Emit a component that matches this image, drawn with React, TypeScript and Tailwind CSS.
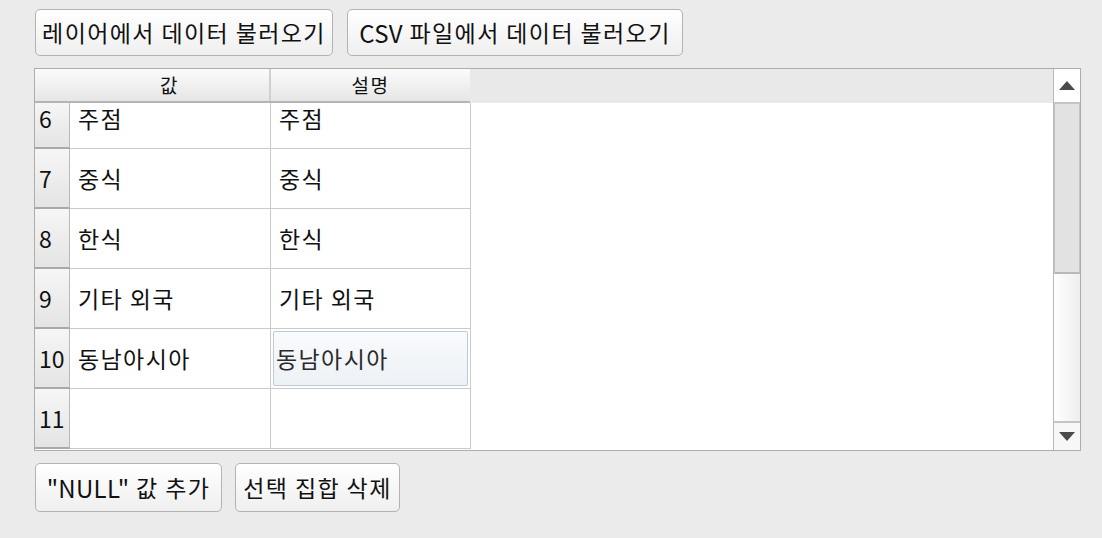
import React from "react";

const FONT = { fontFamily: '"Noto Sans CJK KR", "Noto Sans", sans-serif' };

function Btn({ children, w }: { children: React.ReactNode; w: string }) {
  return (
    <div className={`${w} h-full flex items-center justify-center rounded-[5px] border border-[#b3b3b3] bg-gradient-to-b from-[#ffffff] to-[#efefef] text-[23px] tracking-[1.4px] text-[#111] leading-none whitespace-nowrap`}>
      {children}
    </div>
  );
}

const rows = [
  { n: "6", v: "주점", d: "주점", first: true },
  { n: "7", v: "중식", d: "중식" },
  { n: "8", v: "한식", d: "한식" },
  { n: "9", v: "기타 외국", d: "기타 외국" },
  { n: "10", v: "동남아시아", d: "동남아시아", sel: true },
  { n: "11", v: "", d: "" },
];

export default function App() {
  return (
    <div className="w-[1102px] h-[538px] bg-[#ebebeb] flex flex-col" style={FONT}>
      <div className="flex gap-[14px] h-[47px] mt-[9px] ml-[35px]">
        <Btn w="w-[298px]">레이어에서 데이터 불러오기</Btn>
        <Btn w="w-[336px]">
          <span className="tracking-[0.3px] text-[24px]">CSV</span>&nbsp;파일에서 데이터 불러오기
        </Btn>
      </div>
      <div className="mt-[12px] ml-[34px] w-[1047px] h-[383px] border border-[#adadad] flex bg-white">
        <div className="flex-1 flex flex-col overflow-hidden">
          <div className="h-[34px] flex shrink-0 bg-[#e9e9e9]">
            <div className="flex h-full border-b-2 border-[#b4b4b4] bg-gradient-to-b from-[#fbfbfb] to-[#e6e6e6] text-[19px] tracking-[1.5px] text-[#111]">
              <div className="w-[35px]" />
              <div className="w-[201px] flex items-center justify-center border-r-2 border-[#d0d0d0]">값</div>
              <div className="w-[199px] flex items-center justify-center">설명</div>
            </div>
          </div>
          <div className="flex-1 overflow-hidden">
            <div className="flex flex-col">
              {rows.map((r) => (
                <div
                  key={r.n}
                  className={r.first ? "flex h-[46px] shrink-0 leading-[1.2]" : "flex h-[60px] shrink-0"}
                >
                  <div className={`w-[35px] h-full border-r border-b-2 border-[#a9a9a9] border-r-[#b9b9b9] bg-gradient-to-b from-[#f6f6f6] to-[#e4e4e4] flex items-center pl-[4px] text-[23px] text-[#111] ${r.first ? "pb-[13px]" : ""}`}>
                    {r.n}
                  </div>
                  <div className={`w-[201px] h-full border-r border-b border-[#cacaca] flex items-center pl-[8px] text-[23px] tracking-[1.4px] text-[#111] ${r.first ? "pb-[13px]" : ""}`}>
                    {r.v}
                  </div>
                  <div className={`w-[200px] h-full border-r border-b border-[#cacaca] flex items-center p-[2px] text-[23px] tracking-[1.4px] text-[#111] ${r.first ? "pb-[15px]" : ""}`}>
                    {r.sel ? (
                      <div className="w-full h-full rounded-[2px] border border-[#bfcad6] bg-gradient-to-b from-[#f9fbfd] to-[#edf1f5] flex items-center pl-[2px] text-[#2a2a2a]">
                        {r.d}
                      </div>
                    ) : (
                      <span className="pl-[6px]">{r.d}</span>
                    )}
                  </div>
                </div>
              ))}
            </div>
          </div>
        </div>
        <div className="w-[27px] border-l border-[#b9b9b9] flex flex-col bg-gradient-to-r from-[#ffffff] to-[#eeeeee]">
          <div className="h-[35px] shrink-0 border-b-2 border-[#c4c4c4] flex items-center justify-center bg-white">
            <svg width="16" height="9" viewBox="0 0 16 9"><polygon points="8,0 16,9 0,9" fill="#4a4a4a" /></svg>
          </div>
          <div className="h-[170px] shrink-0 bg-[#e2e2e2] border-x border-b-2 border-[#c3c3c3] border-b-[#b8b8b8]" />
          <div className="flex-1" />
          <div className="h-[29px] shrink-0 border-t-2 border-[#c4c4c4] flex items-center justify-center bg-[#f7f7f7]">
            <svg width="16" height="9" viewBox="0 0 16 9"><polygon points="0,0 16,0 8,9" fill="#4a4a4a" /></svg>
          </div>
        </div>
      </div>
      <div className="flex gap-[13px] h-[49px] mt-[12px] ml-[35px]">
        <Btn w="w-[187px]">
          <span className="tracking-[0.3px] text-[24px]">"NULL"</span>&nbsp;값 추가
        </Btn>
        <Btn w="w-[165px]">선택 집합 삭제</Btn>
      </div>
    </div>
  );
}
